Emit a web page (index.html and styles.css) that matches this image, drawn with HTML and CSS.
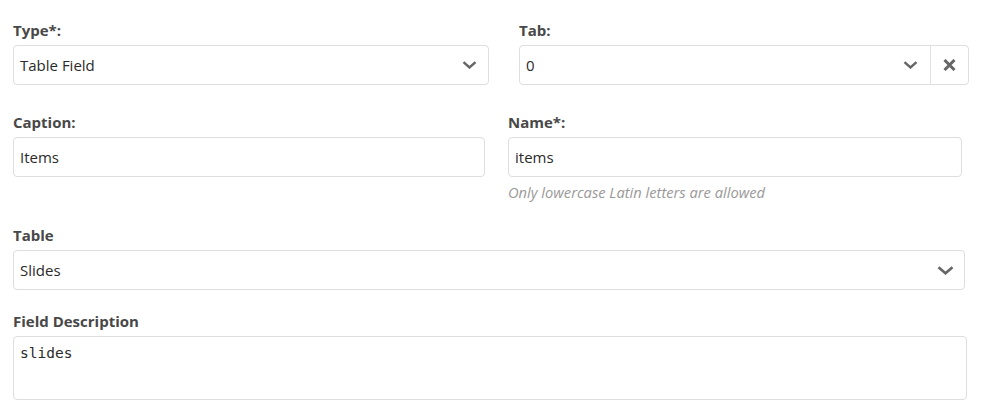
FILE: index.html
```html
<!DOCTYPE html>
<html lang="en">
<head>
<meta charset="utf-8">
<title>Field</title>
<link rel="stylesheet" href="styles.css">
</head>
<body>
<div class="form">
  <div class="row row-1">
    <div class="field">
      <label class="label">Type*:</label>
      <div class="control select">
        <span class="value">Table Field</span>
        <svg class="chev" width="15" height="8" viewBox="0 0 15 8"><polyline points="1.5,1.2 7.5,6.5 13.5,1.2" fill="none" stroke="#666" stroke-width="2.4"/></svg>
      </div>
    </div>
    <div class="field">
      <label class="label">Tab:</label>
      <div class="control select tab">
        <span class="value">0</span>
        <svg class="chev" width="15" height="8" viewBox="0 0 15 8"><polyline points="1.5,1.2 7.5,6.5 13.5,1.2" fill="none" stroke="#666" stroke-width="2.4"/></svg>
        <span class="clear">
          <svg width="13" height="12" viewBox="0 0 13 12"><path d="M1.5 1 L11.5 11 M11.5 1 L1.5 11" fill="none" stroke="#666" stroke-width="3"/></svg>
        </span>
      </div>
    </div>
  </div>
  <div class="row row-2">
    <div class="field">
      <label class="label">Caption:</label>
      <div class="control"><span class="value">Items</span></div>
    </div>
    <div class="field">
      <label class="label">Name*:</label>
      <div class="control"><span class="value">items</span></div>
      <div class="help">Only lowercase Latin letters are allowed</div>
    </div>
  </div>
  <div class="field table-field">
    <label class="label">Table</label>
    <div class="control select">
      <span class="value">Slides</span>
      <svg class="chev" width="17" height="9" viewBox="0 0 17 9"><polyline points="1.5,1.3 8.5,7.3 15.5,1.3" fill="none" stroke="#666" stroke-width="2.6"/></svg>
    </div>
  </div>
  <div class="field desc-field">
    <label class="label">Field Description</label>
    <div class="control textarea">slides</div>
  </div>
</div>
</body>
</html>
```

FILE: styles.css
```css
* { box-sizing: border-box; }
html, body { margin: 0; padding: 0; background: #fff; }
body {
  font-family: "Open Sans", "Noto Sans", "Liberation Sans", sans-serif;
  color: #333;
}
.form {
  padding: 20px 0 0 13px;
}
.row {
  display: grid;
}
.row-1 {
  grid-template-columns: 476px 450px;
  column-gap: 30px;
  margin-bottom: 27px;
}
.row-2 {
  grid-template-columns: 472px 454px;
  column-gap: 23px;
  margin-bottom: 23px;
}
.field {
  display: flex;
  flex-direction: column;
}
.label {
  display: block;
  font-size: 15px;
  font-weight: 700;
  line-height: 20px;
  color: #484848;
  margin-bottom: 5px;
}
.control {
  height: 40px;
  border: 1px solid #dedede;
  border-radius: 4px;
  display: flex;
  align-items: center;
  padding: 0 6px;
  font-size: 15px;
  color: #2b2b2b;
  background: #fff;
}
.control .value {
  flex: 1;
  white-space: nowrap;
}
.select {
  padding-right: 11px;
}
.chev {
  display: block;
  flex: none;
}
.tab {
  padding-right: 0;
}
.tab .chev {
  margin-right: 12px;
}
.clear {
  flex: none;
  width: 38px;
  height: 100%;
  border-left: 1px solid #e2e2e2;
  display: flex;
  align-items: center;
  justify-content: center;
}
.clear svg { display: block; }
.help {
  margin-top: 5px;
  font-size: 14.7px;
  line-height: 20px;
  font-style: italic;
  color: #999;
}
.table-field {
  width: 952px;
  margin-bottom: 21px;
}
.table-field .select {
  padding-right: 10px;
}
.desc-field {
  width: 954px;
}
.textarea {
  height: 64px;
  align-items: flex-start;
  padding: 7px 6px;
  font-family: "DejaVu Sans Mono", "Liberation Mono", monospace;
  font-size: 14.5px;
  line-height: 18px;
}
```
